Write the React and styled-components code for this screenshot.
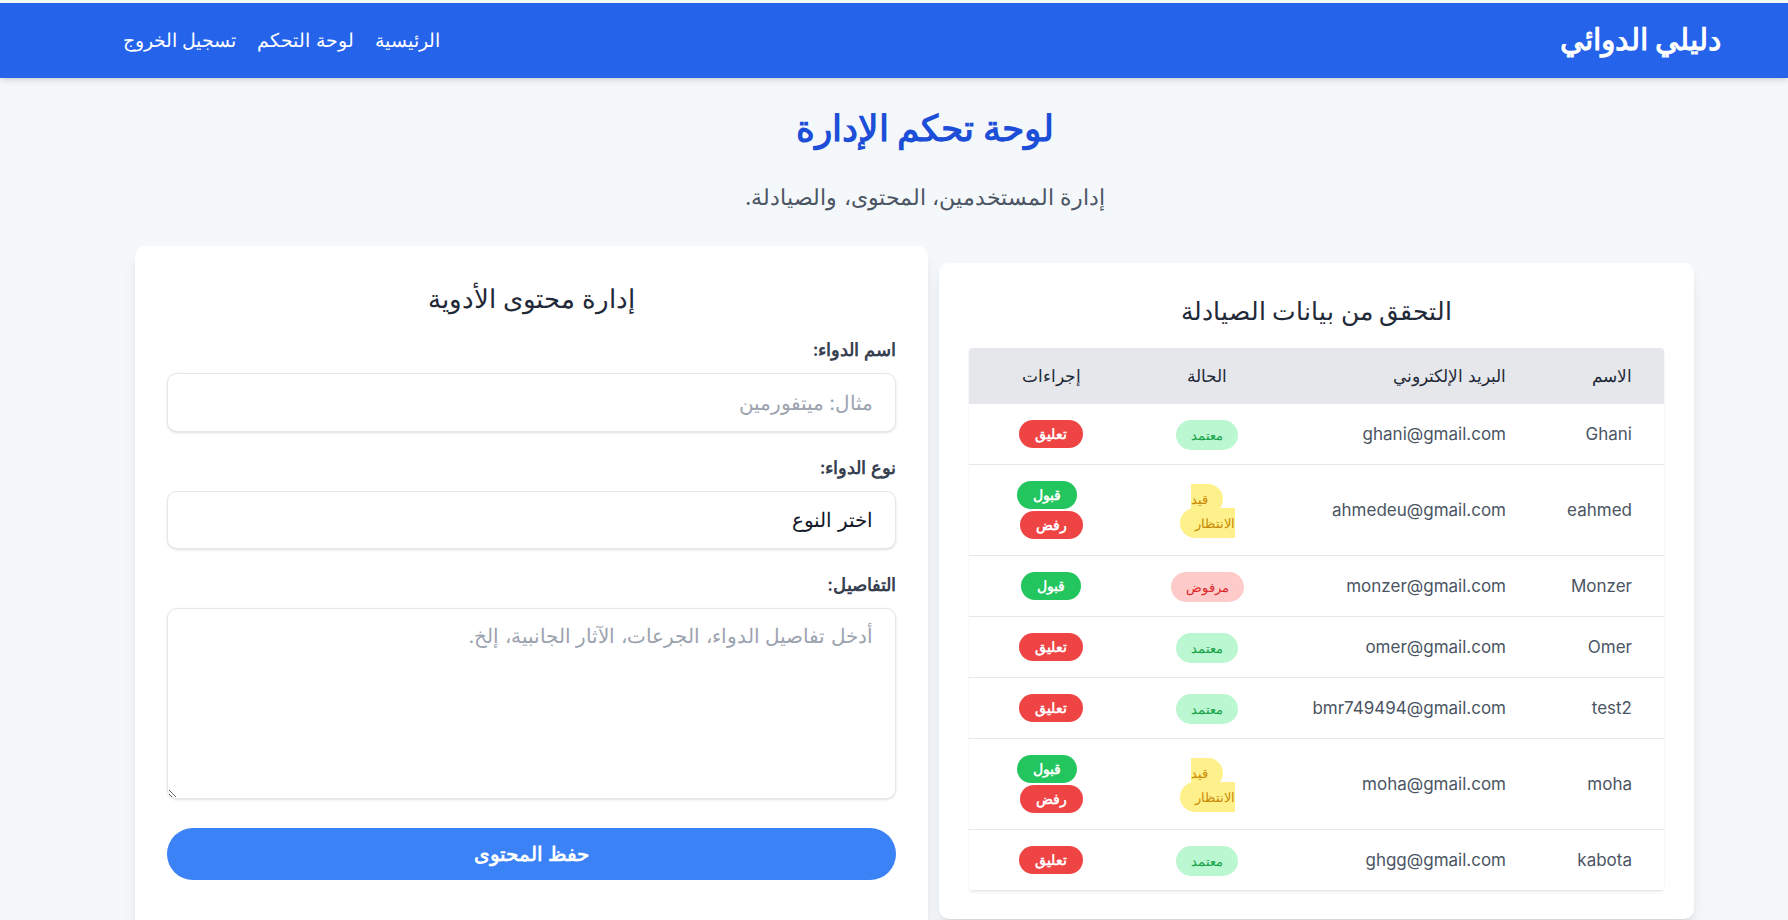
import React from "react";
import styled, { createGlobalStyle } from "styled-components";

const Global = createGlobalStyle`
  * { box-sizing: border-box; }
  body {
    margin: 0;
    background: #f5f8fb;
    font-family: Inter, sans-serif;
  }
`;

const Page = styled.div`
  direction: rtl;
  min-height: 100vh;
  padding-top: 3px;
  background: #f5f8fb;
  color: #1f2937;
`;

const Navbar = styled.nav`
  height: 75px;
  background: #2563eb;
  display: flex;
  align-items: center;
  justify-content: space-between;
  padding: 0 67px 0 123px;
  box-shadow: 0 4px 6px -1px rgba(0, 0, 0, 0.1), 0 2px 4px -2px rgba(0, 0, 0, 0.1);
`;

const Brand = styled.div`
  color: #fff;
  font-size: 30px;
  line-height: 36px;
  font-weight: 700;
  margin-top: -4px;
`;

const NavLinks = styled.div`
  display: flex;
  gap: 21px;
`;

const NavLink = styled.a`
  color: #fff;
  font-size: 19px;
  text-decoration: none;
`;

const Main = styled.main`
  padding: 0 94px 0 135px;
`;

const Header = styled.header`
  text-align: center;
  padding: 30px 0 0 21px;
`;

const Title = styled.h1`
  margin: 0;
  font-size: 36px;
  line-height: 40px;
  font-weight: 700;
  color: #1d4ed8;
`;

const Subtitle = styled.p`
  margin: 35px 0 35px;
  font-size: 22px;
  line-height: 28px;
  color: #4b5563;
`;

const Columns = styled.div`
  display: grid;
  grid-template-columns: 755fr 793fr;
  gap: 11px;
  align-items: start;
`;

const Card = styled.section`
  background: #fff;
  border-radius: 10px;
  padding: ${(p) => p.$pad};
  margin-top: ${(p) => p.$offset || 0}px;
  box-shadow: 0 10px 15px -3px rgba(0, 0, 0, 0.1), 0 4px 6px -4px rgba(0, 0, 0, 0.1);
`;

const CardTitle = styled.h2`
  margin: 0 0 ${(p) => p.$gap}px;
  text-align: center;
  font-size: ${(p) => p.$size}px;
  line-height: 32px;
  font-weight: 500;
  color: #1f2937;
`;

const TableWrap = styled.div`
  overflow-x: auto;
  border-radius: 4px;
  box-shadow: 0 1px 3px rgba(0, 0, 0, 0.08);
`;

const Table = styled.table`
  width: 100%;
  table-layout: fixed;
  border-collapse: collapse;
`;

const Th = styled.th`
  background: #e5e7eb;
  padding: 16px 32px;
  font-size: 17px;
  line-height: 24px;
  font-weight: 500;
  color: #1f2937;
  text-align: ${(p) => p.$align || "right"};
`;

const Td = styled.td`
  padding: 16px 32px;
  font-size: 17px;
  line-height: 24px;
  color: #4b5563;
  border-bottom: 1px solid #e5e7eb;
  text-align: ${(p) => p.$align || "right"};
  vertical-align: middle;
`;

const badgeColors = {
  approved: ["#bbf7d0", "#16a34a"],
  rejected: ["#fecaca", "#dc2626"],
  pending: ["#fef08a", "#ca8a04"],
};

const Badge = styled.span`
  padding: 7px 15px;
  border-radius: 9999px;
  font-size: 13px;
  line-height: 16px;
  background: ${(p) => badgeColors[p.$status][0]};
  color: ${(p) => badgeColors[p.$status][1]};
`;

const ActionButton = styled.button`
  display: inline-block;
  border: none;
  padding: 4px 16px;
  border-radius: 9999px;
  font-family: inherit;
  font-size: 14px;
  line-height: 20px;
  font-weight: 700;
  color: #fff;
  background: ${(p) => (p.$kind === "accept" ? "#22c55e" : "#ef4444")};
  margin: ${(p) => (p.$stacked ? 2 : 0)}px ${(p) => (p.$spaced ? 8 : 0)}px 0 0;
  vertical-align: middle;
  cursor: pointer;
`;

const Field = styled.div`
  margin-bottom: ${(p) => p.$gap || 24}px;
`;

const Label = styled.label`
  display: block;
  margin-bottom: 11px;
  font-size: 18px;
  line-height: 24px;
  font-weight: 600;
  color: #374151;
`;

const inputBase = `
  display: block;
  width: 100%;
  border: 1px solid #e5e7eb;
  border-radius: 10px;
  background: #fff;
  font-family: inherit;
  font-size: 20px;
  line-height: 27px;
  color: #111827;
  box-shadow: 0 1px 3px rgba(0, 0, 0, 0.1), 0 1px 2px -1px rgba(0, 0, 0, 0.1);
  outline: none;
  &::placeholder { color: #9ca3af; }
`;

const Input = styled.input`
  ${inputBase}
  height: 59px;
  padding: 0 22px;
`;

const Select = styled.select`
  ${inputBase}
  height: 58px;
  padding: 0 22px;
  appearance: none;
`;

const TextArea = styled.textarea`
  ${inputBase}
  height: 191px;
  padding: 14px 22px;
  resize: vertical;
`;

const SaveButton = styled.button`
  display: block;
  width: 100%;
  height: 52px;
  border: none;
  border-radius: 9999px;
  background: #3b82f6;
  color: #fff;
  font-family: inherit;
  font-size: 20px;
  font-weight: 700;
  cursor: pointer;
`;

const pharmacists = [
  { name: "Ghani", email: "ghani@gmail.com", status: "approved" },
  { name: "eahmed", email: "ahmedeu@gmail.com", status: "pending" },
  { name: "Monzer", email: "monzer@gmail.com", status: "rejected" },
  { name: "Omer", email: "omer@gmail.com", status: "approved" },
  { name: "test2", email: "bmr749494@gmail.com", status: "approved" },
  { name: "moha", email: "moha@gmail.com", status: "pending" },
  { name: "kabota", email: "ghgg@gmail.com", status: "approved" },
];

const statusText = {
  approved: "معتمد",
  rejected: "مرفوض",
  pending: "قيد الانتظار",
};

function Actions({ status }) {
  if (status === "pending") {
    return (
      <>
        <ActionButton $kind="accept" $spaced>قبول</ActionButton>
        <ActionButton $kind="reject" $stacked>رفض</ActionButton>
      </>
    );
  }
  if (status === "rejected") {
    return <ActionButton $kind="accept">قبول</ActionButton>;
  }
  return <ActionButton $kind="reject">تعليق</ActionButton>;
}

export default function App() {
  return (
    <Page>
      <Global />
      <Navbar>
        <Brand>دليلي الدوائي</Brand>
        <NavLinks>
          <NavLink href="#">الرئيسية</NavLink>
          <NavLink href="#">لوحة التحكم</NavLink>
          <NavLink href="#">تسجيل الخروج</NavLink>
        </NavLinks>
      </Navbar>

      <Main>
        <Header>
          <Title>لوحة تحكم الإدارة</Title>
          <Subtitle>إدارة المستخدمين، المحتوى، والصيادلة.</Subtitle>
        </Header>

        <Columns>
          <Card $pad="32px 30px 28px" $offset={17}>
            <CardTitle $gap={21} $size={24.5}>التحقق من بيانات الصيادلة</CardTitle>
            <TableWrap>
              <Table>
                <colgroup>
                  <col style={{ width: 126 }} />
                  <col style={{ width: 257 }} />
                  <col style={{ width: 148 }} />
                  <col style={{ width: 164 }} />
                </colgroup>
                <thead>
                  <tr>
                    <Th>الاسم</Th>
                    <Th>البريد الإلكتروني</Th>
                    <Th $align="center">الحالة</Th>
                    <Th $align="center">إجراءات</Th>
                  </tr>
                </thead>
                <tbody>
                  {pharmacists.map((p) => (
                    <tr key={p.email}>
                      <Td>{p.name}</Td>
                      <Td>{p.email}</Td>
                      <Td $align="center">
                        <Badge $status={p.status}>{statusText[p.status]}</Badge>
                      </Td>
                      <Td $align="center">
                        <Actions status={p.status} />
                      </Td>
                    </tr>
                  ))}
                </tbody>
              </Table>
            </TableWrap>
          </Card>

          <Card $pad="37px 32px 56px">
            <CardTitle $gap={23} $size={26}>إدارة محتوى الأدوية</CardTitle>
            <Field>
              <Label>اسم الدواء:</Label>
              <Input placeholder="مثال: ميتفورمين" />
            </Field>
            <Field>
              <Label>نوع الدواء:</Label>
              <Select defaultValue="">
                <option value="">اختر النوع</option>
                <option value="tablet">أقراص</option>
                <option value="syrup">شراب</option>
              </Select>
            </Field>
            <Field $gap={29}>
              <Label>التفاصيل:</Label>
              <TextArea placeholder="أدخل تفاصيل الدواء، الجرعات، الآثار الجانبية، إلخ." />
            </Field>
            <SaveButton>حفظ المحتوى</SaveButton>
          </Card>
        </Columns>
      </Main>
    </Page>
  );
}
